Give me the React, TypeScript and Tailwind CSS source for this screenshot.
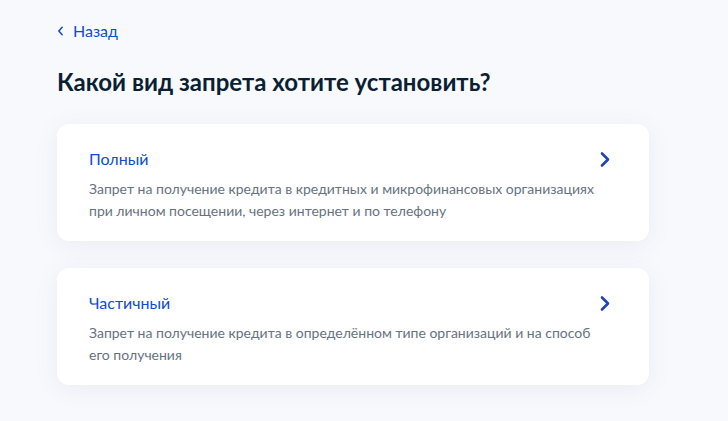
import React from "react";

function Chevron({ className }: { className?: string }) {
  return (
    <svg viewBox="0 0 12 16" className={className} fill="none">
      <path d="M3 2l6 6-6 6" stroke="currentColor" strokeWidth="2.6" strokeLinecap="round" strokeLinejoin="round" />
    </svg>
  );
}

function Card({ title, text }: { title: string; text: React.ReactNode }) {
  return (
    <div className="bg-white rounded-xl shadow-[0_4px_24px_rgba(60,90,160,0.08)] pl-8 pr-[38px] pt-[23px] pb-[19px]">
      <div className="flex items-center justify-between">
        <div className="text-[16px] leading-6 text-[#0d4cd3]">{title}</div>
        <Chevron className="w-[12px] h-[17px] text-[#1e43b8]" />
      </div>
      <div className="mt-[7px] text-[14px] leading-[22px] text-[#66727f]">{text}</div>
    </div>
  );
}

export default function App() {
  return (
    <div className="min-h-[421px] w-[728px] bg-[#f8f9fc] pl-[57px] pr-[79px] pt-[19px]" style={{ fontFamily: "Lato, 'Noto Sans', sans-serif" }}>
      <div className="flex items-center gap-[9px] text-[#0d4cd3]">
        <svg viewBox="0 0 8 12" className="w-[7px] h-[10px]" fill="none">
          <path d="M6 1.5L2 6l4 4.5" stroke="currentColor" strokeWidth="1.8" strokeLinecap="round" strokeLinejoin="round" />
        </svg>
        <span className="text-[16px] leading-6">Назад</span>
      </div>
      <h1 className="mt-[23px] text-[24px] leading-8 font-bold text-[#0b1f33]">Какой вид запрета хотите установить?</h1>
      <div className="mt-[26px] flex flex-col gap-[27px]">
        <Card
          title="Полный"
          text={<>Запрет на получение кредита в кредитных и микрофинансовых организациях<br />при личном посещении, через интернет и по телефону</>}
        />
        <Card
          title="Частичный"
          text={<>Запрет на получение кредита в определённом типе организаций и на способ<br />его получения</>}
        />
      </div>
    </div>
  );
}
